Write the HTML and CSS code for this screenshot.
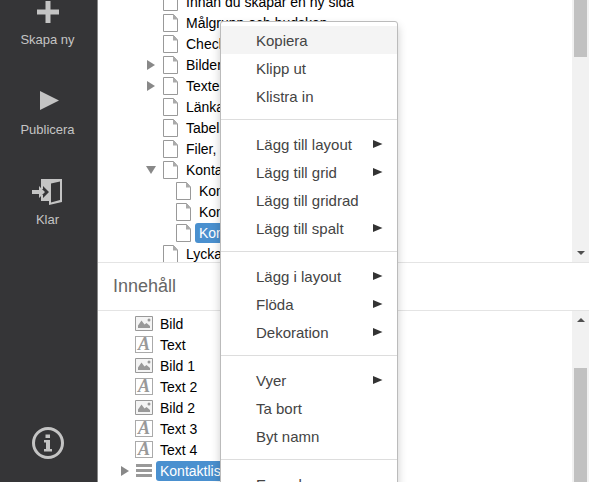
FILE: index.html
```
<!DOCTYPE html>
<html lang="sv">

<head>
    <meta charset="UTF-8">
    <meta name="viewport" content="width=device-width, initial-scale=1.0">
    <title>Innehåll</title>
    <link rel="stylesheet" href="styles.css">
</head>

<body>
    <svg class="defs" aria-hidden="true">
        <symbol id="page" viewBox="0 0 15 18">
            <path d="M.5 .5H10.500L14.500 5V17.500H.5Z" fill="#fff" stroke="#999" />
            <path d="M10 0V5.500H15Z" fill="#aaa" />
        </symbol>
        <symbol id="image" viewBox="0 0 18 15">
            <path d="M.5 .5H17.500V14.500H.5Z" fill="#f4f4f4" stroke="#999" />
            <path d="M3 12V9.500L6.500 4.500L9.500 8.500L11.500 7L15 10V12Z" fill="#999" />
            <circle cx="14" cy="4" r="1.500" fill="#999" />
        </symbol>
        <symbol id="arrow" viewBox="0 0 10 10">
            <path d="M1 0L9 5L1 10Z" fill="currentColor" />
        </symbol>
        <symbol id="submenu" viewBox="0 0 10 10">
            <path d="M0 1L9.500 5L0 9Z" fill="currentColor" />
        </symbol>
        <symbol id="step" viewBox="0 0 8 8">
            <path d="M2 0L6 4L2 8Z" fill="currentColor" />
        </symbol>
    </svg>

    <div class="app">
        <nav class="sidebar">
            <button type="button" class="tool">
                <svg viewBox="0 0 32 32"><path d="M13.500 5H18.500V13.500H27V18.500H18.500V27H13.500V18.500H5V13.500H13.500Z" /></svg>
                <span>Skapa ny</span>
            </button>
            <button type="button" class="tool">
                <svg viewBox="0 0 32 32"><path d="M8 5L27 14.500L8 24Z" /></svg>
                <span>Publicera</span>
            </button>
            <button type="button" class="tool">
                <svg viewBox="0 0 32 32">
                    <path fill-rule="evenodd" d="M9 3H30V26L17 29V25H9V19H11V22L17 16L11 10V13H9ZM19 7.500V26.500L28 24V5.500Z" />
                    <path d="M0 14H7V10L13 16L7 22V18H0Z" />
                </svg>
                <span>Klar</span>
            </button>
            <button type="button" class="tool info" aria-label="Information">
                <svg viewBox="0 0 32 32">
                    <circle cx="16" cy="16" r="14.500" fill="none" stroke="currentColor" stroke-width="3" />
                    <path d="M13.500 7.500H18V11H13.500ZM12 13H18V22H20V24.500H12V22H14V15.500H12Z" />
                </svg>
            </button>
        </nav>

        <main class="main">
            <section class="pane pages">
                <ul class="tree">
                    <li class="row"><span class="toggle"></span><svg class="page"><use href="#page" /></svg><span class="name">Innan du skapar en ny sida</span></li>
                    <li class="row"><span class="toggle"></span><svg class="page"><use href="#page" /></svg><span class="name">Målgrupp och budskap</span></li>
                    <li class="row"><span class="toggle"></span><svg class="page"><use href="#page" /></svg><span class="name">Check</span></li>
                    <li class="row"><svg class="toggle"><use href="#arrow" /></svg><svg class="page"><use href="#page" /></svg><span class="name">Bilder</span></li>
                    <li class="row"><svg class="toggle"><use href="#arrow" /></svg><svg class="page"><use href="#page" /></svg><span class="name">Texter</span></li>
                    <li class="row"><span class="toggle"></span><svg class="page"><use href="#page" /></svg><span class="name">Länkar</span></li>
                    <li class="row"><span class="toggle"></span><svg class="page"><use href="#page" /></svg><span class="name">Tabell</span></li>
                    <li class="row"><span class="toggle"></span><svg class="page"><use href="#page" /></svg><span class="name">Filer,</span></li>
                    <li class="row"><svg class="toggle open"><use href="#arrow" /></svg><svg class="page"><use href="#page" /></svg><span class="name">Kontakt</span></li>
                    <li class="row child"><span class="toggle"></span><svg class="page"><use href="#page" /></svg><span class="name">Kont</span></li>
                    <li class="row child"><span class="toggle"></span><svg class="page"><use href="#page" /></svg><span class="name">Kont</span></li>
                    <li class="row child"><span class="toggle"></span><svg class="page"><use href="#page" /></svg><span class="name selected">Kont</span></li>
                    <li class="row"><span class="toggle"></span><svg class="page"><use href="#page" /></svg><span class="name">Lycka</span></li>
                </ul>
                <div class="scrollbar">
                    <div class="thumb"></div>
                    <svg class="step down"><use href="#step" /></svg>
                </div>
            </section>

            <h2 class="heading">Innehåll</h2>

            <section class="pane content">
                <ul class="tree">
                    <li class="row"><span class="toggle"></span><svg class="part"><use href="#image" /></svg><span class="name">Bild</span></li>
                    <li class="row"><span class="toggle"></span><span class="part letter">A</span><span class="name">Text</span></li>
                    <li class="row"><span class="toggle"></span><svg class="part"><use href="#image" /></svg><span class="name">Bild 1</span></li>
                    <li class="row"><span class="toggle"></span><span class="part letter">A</span><span class="name">Text 2</span></li>
                    <li class="row"><span class="toggle"></span><svg class="part"><use href="#image" /></svg><span class="name">Bild 2</span></li>
                    <li class="row"><span class="toggle"></span><span class="part letter">A</span><span class="name">Text 3</span></li>
                    <li class="row"><span class="toggle"></span><span class="part letter">A</span><span class="name">Text 4</span></li>
                    <li class="row"><svg class="toggle"><use href="#arrow" /></svg><svg class="part" viewBox="0 0 18 15"><path d="M1 1H17V4H1ZM1 6H17V9H1ZM1 11H17V14H1Z" fill="#999" /></svg><span class="name selected">Kontaktlista</span></li>
                </ul>
                <div class="scrollbar">
                    <svg class="step up"><use href="#step" /></svg>
                    <div class="thumb"></div>
                </div>
            </section>
        </main>
    </div>

    <div class="menu" role="menu">
        <button type="button" class="item active" role="menuitem">Kopiera</button>
        <button type="button" class="item" role="menuitem">Klipp ut</button>
        <button type="button" class="item" role="menuitem">Klistra in</button>
        <hr>
        <button type="button" class="item" role="menuitem">Lägg till layout<svg><use href="#submenu" /></svg></button>
        <button type="button" class="item" role="menuitem">Lägg till grid<svg><use href="#submenu" /></svg></button>
        <button type="button" class="item" role="menuitem">Lägg till gridrad</button>
        <button type="button" class="item" role="menuitem">Lägg till spalt<svg><use href="#submenu" /></svg></button>
        <hr>
        <button type="button" class="item" role="menuitem">Lägg i layout<svg><use href="#submenu" /></svg></button>
        <button type="button" class="item" role="menuitem">Flöda<svg><use href="#submenu" /></svg></button>
        <button type="button" class="item" role="menuitem">Dekoration<svg><use href="#submenu" /></svg></button>
        <hr>
        <button type="button" class="item" role="menuitem">Vyer<svg><use href="#submenu" /></svg></button>
        <button type="button" class="item" role="menuitem">Ta bort</button>
        <button type="button" class="item" role="menuitem">Byt namn</button>
        <hr>
        <button type="button" class="item" role="menuitem">Egenskaper</button>
    </div>
</body>

</html>
```
FILE: styles.css
```
* {
    box-sizing: border-box;
}

body {
    margin: 0;
    height: 100vh;
    overflow: hidden;
    background: #fff;
    font-family: "Liberation Sans", Arial, sans-serif;
    font-size: 14px;
    color: #000;
}

button {
    border: none;
    background: none;
    font-family: inherit;
    cursor: pointer;
}

.defs {
    display: none;
}

.app {
    display: flex;
    height: 100vh;
}

/* Left toolbar */
.sidebar {
    display: flex;
    flex-direction: column;
    flex: 0 0 98px;
    padding-bottom: 23px;
    background: #353537;
    border-right: 1px solid #888;
}

.tool {
    display: flex;
    flex-direction: column;
    align-items: center;
    padding: 0 2px 34px 0;
    color: #c4c4c4;
    font-size: 13px;
    line-height: 24px;
}

.tool:first-child {
    margin-top: -4px;
}

.tool svg {
    width: 32px;
    height: 32px;
    fill: currentColor;
}

.info {
    margin-top: auto;
    padding-bottom: 0;
}

.main {
    display: flex;
    flex-direction: column;
    flex: 1;
    min-width: 0;
}

.pane {
    display: flex;
    overflow: hidden;
}

.pages {
    flex: 0 0 262px;
}

.content {
    flex: 1;
}

.heading {
    margin: 0;
    padding: 0 15px;
    border-top: 1px solid #e4e4e4;
    border-bottom: 1px solid #e4e4e4;
    color: #666;
    font-size: 18px;
    font-weight: normal;
    line-height: 47px;
}

/* Trees */
.tree {
    flex: 1;
    margin: 0;
    padding: 0;
    list-style: none;
}

.pages .tree {
    margin-top: -9px;
    padding-left: 48px;
}

.content .tree {
    padding: 2px 0 0 22px;
}

.row {
    display: flex;
    align-items: center;
    height: 21px;
}

.child {
    padding-left: 13px;
}

.toggle {
    width: 10px;
    height: 10px;
    margin-right: 7px;
    color: #888;
}

.content .toggle {
    margin-right: 5px;
}

.open {
    transform: rotate(90deg);
}

.page {
    width: 15px;
    height: 18px;
    margin-right: 4px;
}

.part {
    width: 18px;
    height: 15px;
    margin-right: 3px;
}

.letter {
    height: 17px;
    border: 1px solid #aaa;
    color: #999;
    font: italic bold 18px/15px "Liberation Serif", serif;
    text-align: center;
}

.name {
    padding: 0 4px;
    line-height: 20px;
    white-space: nowrap;
}

.selected {
    border-radius: 3px;
    background: #4a90cf;
    color: #fff;
}

/* Scrollbars */
.scrollbar {
    display: flex;
    flex-direction: column;
    align-items: center;
    width: 17px;
    background: #f1f1f1;
}

.thumb {
    width: 13px;
    background: #c1c1c1;
}

.pages .thumb {
    height: 57px;
}

.content .thumb {
    flex: 1;
}

.step {
    width: 8px;
    height: 8px;
    color: #505050;
}

.down {
    margin: auto 0 5px;
    transform: rotate(90deg);
}

.up {
    margin: 5px 0 44px;
    transform: rotate(-90deg);
}

/* Context menu */
.menu {
    position: absolute;
    top: 21px;
    left: 220px;
    width: 178px;
    padding: 4px 0;
    border: 1px solid #bbb;
    border-radius: 3px;
    background: #fff;
    box-shadow: 0 5px 10px rgba(0, 0, 0, 0.2);
}

.item {
    display: flex;
    align-items: center;
    justify-content: space-between;
    width: 100%;
    height: 28px;
    padding: 0 14px 0 35px;
    color: #444;
    font-size: 15px;
    text-align: left;
}

.item svg {
    width: 10px;
    height: 10px;
    color: #333;
}

.item:hover,
.active {
    background: #f4f4f4;
}

.menu hr {
    margin: 9px 0 10px;
    border: none;
    border-top: 1px solid #ddd;
}
```
